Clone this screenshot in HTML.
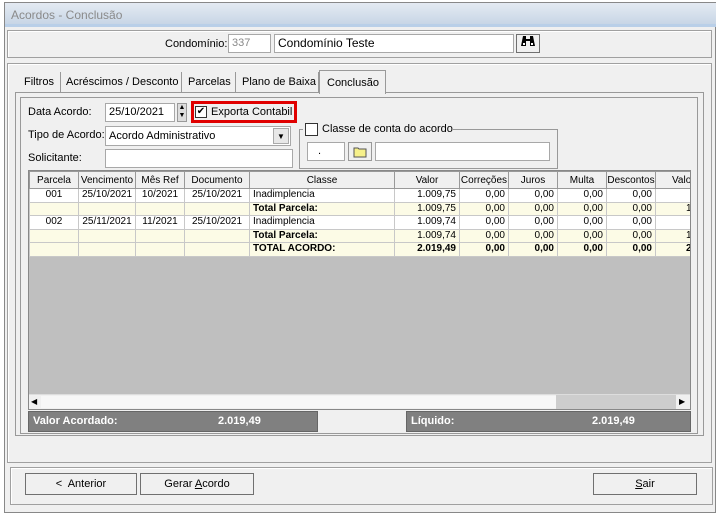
<!DOCTYPE html>
<html><head><meta charset="utf-8"><style>
*{box-sizing:border-box;margin:0;padding:0}
body{width:716px;height:515px;background:#fff;font-family:"Liberation Sans",sans-serif;font-size:11px;color:#000;position:relative;overflow:hidden}
.a{position:absolute}
.win{left:4px;top:2px;width:712px;height:511px;background:#f0f0f0;border:1px solid #888}
.title{left:5px;top:3px;width:711px;height:24px;background:linear-gradient(#e4eaf2,#c8d6e6);border-bottom:3px solid #b9cfe8;color:#8a8a8a;font-size:12px;padding:5px 6px}
.pan{border:1px solid #a0a0a0;box-shadow:inset 1px 1px 0 #fff}
.inp{background:#fff;border:1px solid #a8a8a8;padding:2px 3px;white-space:nowrap;overflow:hidden}
.btn{background:#f0f0f0;border:1px solid #707070;text-align:center}
.tab{top:72px;height:21px;border-right:1px solid #999;padding:4px 6px;font-size:11px;white-space:nowrap}
table{border-collapse:collapse;font-size:10px;table-layout:fixed}
td{border:1px solid #c8c8c8;height:13.5px;padding:0 3px;white-space:nowrap;line-height:12px;overflow:hidden}
th{font-weight:normal;background:#f0f0f0;border:1px solid #999;height:17px;font-size:10px;overflow:hidden;white-space:nowrap}
.y td{background:#fcfbe6}
.r{text-align:right}.c{text-align:center}
.sum{background:#808080;color:#fff;font-weight:bold;font-size:11px;border:1px solid #666;height:21px;top:411px;padding:3px 4px}
</style></head><body>
<div class="a win"></div>
<div class="a title">Acordos - Conclusão</div>
<div class="a pan" style="left:7px;top:30px;width:705px;height:28px"></div>
<div class="a" style="left:165px;top:38px">Condomínio:</div>
<div class="a inp" style="left:228px;top:34px;width:43px;height:19px;color:#888">337</div>
<div class="a inp" style="left:274px;top:34px;width:240px;height:19px;font-size:12px;padding-top:1px">Condomínio Teste</div>
<div class="a btn" style="left:516px;top:34px;width:24px;height:19px;line-height:16px">
<svg width="14" height="12" viewBox="0 0 14 12"><path d="M2 1h3v3h4V1h3l2 10H9V6H5v5H0z" fill="#000"/><rect x="2" y="8" width="2" height="2" fill="#fff"/><rect x="10" y="8" width="2" height="2" fill="#fff"/></svg></div>
<div class="a pan" style="left:7px;top:63px;width:705px;height:400px"></div>
<div class="a" style="left:15px;top:92px;width:689px;height:344px;border:1px solid #999;background:#f0f0f0"></div>
<div class="a tab" style="left:18px">Filtros</div>
<div class="a tab" style="left:60px;width:122px">Acréscimos / Desconto</div>
<div class="a tab" style="left:182px;width:54px">Parcelas</div>
<div class="a tab" style="left:236px;width:83px">Plano de Baixa</div>
<div class="a" style="left:319px;top:70px;width:67px;height:24px;background:#f0f0f0;border:1px solid #999;border-bottom:none;padding:6px 7px">Conclusão</div>
<div class="a" style="left:20px;top:97px;width:678px;height:337px;border:1px solid #999"></div>
<div class="a" style="left:28px;top:106px">Data Acordo:</div>
<div class="a inp" style="left:105px;top:103px;width:70px;height:19px;font-size:11px">25/10/2021</div>
<div class="a" style="left:177px;top:103px;width:10px;height:19px;background:#ddd;border:1px solid #999;font-size:7px;line-height:8px;text-align:center">▲<br>▼</div>
<div class="a" style="left:191px;top:101px;width:106px;height:22px;border:3px solid #e00000"></div>
<div class="a" style="left:195px;top:106px;width:12px;height:12px;border:1px solid #333;background:#fff;font-size:10px;line-height:10px;text-align:center">✔</div>
<div class="a" style="left:211px;top:106px">Exporta Contabil</div>
<div class="a" style="left:28px;top:129px">Tipo de Acordo:</div>
<div class="a inp" style="left:105px;top:126px;width:186px;height:20px;padding-top:3px">Acordo Administrativo</div>
<div class="a" style="left:273px;top:128px;width:16px;height:16px;background:#e8e8e8;border:1px solid #aaa;font-size:8px;text-align:center;line-height:15px">▼</div>
<div class="a" style="left:28px;top:152px">Solicitante:</div>
<div class="a inp" style="left:105px;top:149px;width:188px;height:19px"></div>
<div class="a" style="left:299px;top:129px;width:259px;height:40px;border:1px solid #999"></div>
<div class="a" style="left:303px;top:122px;width:150px;height:14px;background:#f0f0f0"></div>
<div class="a" style="left:305px;top:123px;width:13px;height:13px;border:1px solid #333;background:#fff"></div>
<div class="a" style="left:322px;top:123px">Classe de conta do acordo</div>
<div class="a inp" style="left:307px;top:142px;width:38px;height:19px;padding-left:10px">.</div>
<div class="a btn" style="left:348px;top:142px;width:24px;height:19px;border-color:#999"><svg width="14" height="12" viewBox="0 0 14 12" style="margin-top:3px"><path d="M1 2h4l1 1h7v8H1z" fill="#f6f08a" stroke="#555"/></svg></div>
<div class="a inp" style="left:375px;top:142px;width:175px;height:19px"></div>
<div class="a" style="left:28px;top:170px;width:663px;height:240px;background:#bfbfbf;border:1px solid #888;overflow:hidden">
<table style="width:697px;background:#fff">
<colgroup><col style="width:49px"><col style="width:57px"><col style="width:49px"><col style="width:65px"><col style="width:145px"><col style="width:65px"><col style="width:49px"><col style="width:49px"><col style="width:49px"><col style="width:49px"><col style="width:71px"></colgroup>
<tr><th>Parcela</th><th>Vencimento</th><th>Mês Ref</th><th>Documento</th><th>Classe</th><th>Valor</th><th>Correções</th><th>Juros</th><th>Multa</th><th>Descontos</th><th style="text-align:left;padding-left:16px">Valo</th></tr>
<tr><td class="c">001</td><td class="c">25/10/2021</td><td class="c">10/2021</td><td class="c">25/10/2021</td><td>Inadimplencia</td><td class="r">1.009,75</td><td class="r">0,00</td><td class="r">0,00</td><td class="r">0,00</td><td class="r">0,00</td><td></td></tr>
<tr class="y"><td></td><td></td><td></td><td></td><td><b>Total Parcela:</b></td><td class="r">1.009,75</td><td class="r">0,00</td><td class="r">0,00</td><td class="r">0,00</td><td class="r">0,00</td><td style="padding-left:30px">1</td></tr>
<tr><td class="c">002</td><td class="c">25/11/2021</td><td class="c">11/2021</td><td class="c">25/10/2021</td><td>Inadimplencia</td><td class="r">1.009,74</td><td class="r">0,00</td><td class="r">0,00</td><td class="r">0,00</td><td class="r">0,00</td><td></td></tr>
<tr class="y"><td></td><td></td><td></td><td></td><td><b>Total Parcela:</b></td><td class="r">1.009,74</td><td class="r">0,00</td><td class="r">0,00</td><td class="r">0,00</td><td class="r">0,00</td><td style="padding-left:30px">1</td></tr>
<tr class="y" style="font-weight:bold"><td></td><td></td><td></td><td></td><td>TOTAL ACORDO:</td><td class="r">2.019,49</td><td class="r">0,00</td><td class="r">0,00</td><td class="r">0,00</td><td class="r">0,00</td><td style="padding-left:30px">2</td></tr>
</table>
<div class="a" style="left:0;top:223px;width:661px;height:15px;background:#f0f0f0;border-top:1px solid #ddd">
<div class="a" style="left:2px;top:2px;font-size:8px">◀</div>
<div class="a" style="left:12px;top:1px;width:515px;height:12px;background:#f7f7f7"></div>
<div class="a" style="left:527px;top:0;width:120px;height:14px;background:#cdcdcd"></div>
<div class="a" style="left:650px;top:2px;font-size:8px">▶</div></div>
</div>
<div class="a sum" style="left:28px;width:290px">Valor Acordado:<span class="a" style="top:3px;left:189px">2.019,49</span></div>
<div class="a sum" style="left:406px;width:285px">Líquido:<span class="a" style="left:185px;top:3px">2.019,49</span></div>
<div class="a pan" style="left:10px;top:467px;width:703px;height:38px"></div>
<div class="a btn" style="left:25px;top:473px;width:112px;height:22px;padding-top:4px">&lt;&nbsp; Anterior</div>
<div class="a btn" style="left:140px;top:473px;width:114px;height:22px;padding-top:4px">Gerar <u>A</u>cordo</div>
<div class="a btn" style="left:593px;top:473px;width:104px;height:22px;padding-top:4px"><u>S</u>air</div>
</body></html>
